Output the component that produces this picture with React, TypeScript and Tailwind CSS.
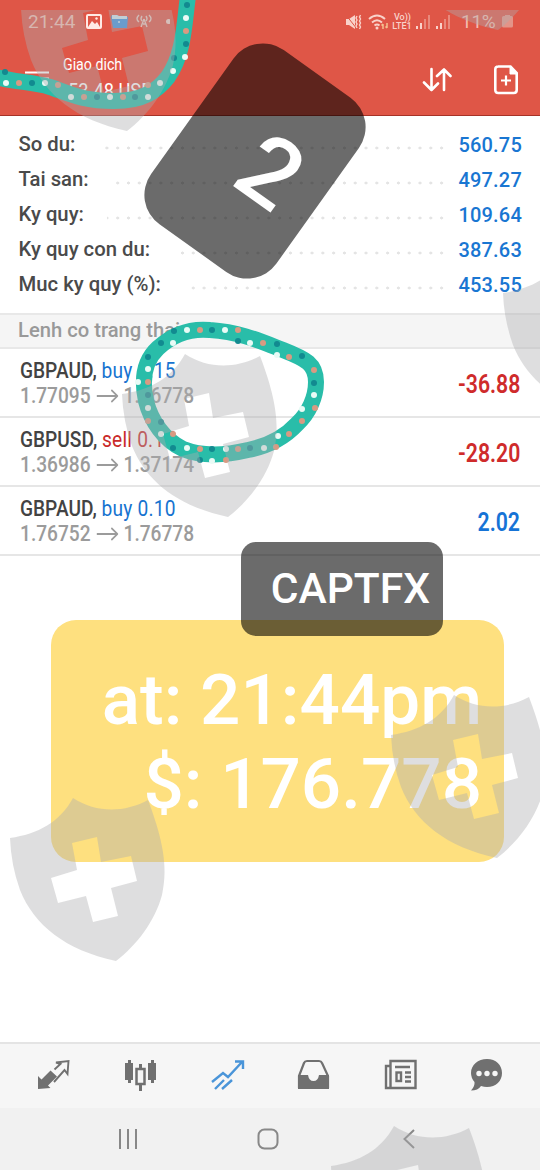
const balances = [
    { label: "So du:", value: "560.75", dots: "w-[346px]" },
    { label: "Tai san:", value: "497.27", dots: "w-[335px]" },
    { label: "Ky quy:", value: "109.64", dots: "w-[340px]" },
    { label: "Ky quy con du:", value: "387.63", dots: "w-[271px]" },
    { label: "Muc ky quy (%):", value: "453.55", dots: "w-[261px]" },
];

const orders = [
    { symbol: "GBPAUD", side: "buy 0.15", from: "1.77095", to: "1.76778", profit: "-36.88" },
    { symbol: "GBPUSD", side: "sell 0.15", from: "1.36986", to: "1.37174", profit: "-28.20" },
    { symbol: "GBPAUD", side: "buy 0.10", from: "1.76752", to: "1.76778", profit: "2.02" },
];

const white = "#e9fbf6";
const teal = "#128a90";
const coral = "#d99a82";

// x, y, colour
const ringDots: [number, number, string][] = [
    [187, 330, white], [200, 330, coral], [212, 330, teal], [225, 330, white], [238, 330, coral],
    [174, 331, teal], [161, 343, teal], [173, 343, white], [238, 341, teal], [250, 343, white],
    [263, 343, coral], [277, 344, teal], [277, 355, white], [289, 357, coral], [302, 356, teal],
    [148, 357, teal], [148, 369, white], [138, 382, white], [148, 382, coral], [148, 395, teal],
    [148, 408, white], [148, 421, coral], [161, 422, teal], [161, 434, white], [173, 434, coral],
    [173, 448, teal], [187, 448, white], [200, 449, coral], [212, 449, teal], [200, 460, teal],
    [212, 461, white], [226, 460, coral], [226, 449, white], [238, 449, coral], [250, 448, teal],
    [264, 448, white], [276, 447, coral], [278, 436, white], [289, 434, coral], [302, 421, coral],
    [302, 409, white], [315, 408, coral], [314, 395, white], [314, 383, teal], [314, 370, coral],
];

const arcDots: [number, number, string][] = [
    [6, 83, white], [5, 72, teal], [19, 83, coral], [32, 83, teal], [45, 83, white],
    [71, 97, white], [58, 85, coral], [84, 97, coral], [97, 97, teal], [110, 97, white],
    [123, 97, coral], [135, 97, teal], [148, 97, white], [148, 85, coral], [160, 83, white],
    [173, 71, white], [174, 58, teal], [185, 57, white], [186, 44, teal], [186, 31, coral],
    [186, 18, white], [187, 5, teal],
];

const shields = [
    "translate(11 -830)",
    "translate(382 -931)",
    "translate(493 -545)",
    "translate(112 -444)",
    "translate(381 -103)",
    "translate(0 0)",
    "translate(321 328)",
];

const StatusBar = () => (
    <div className="flex h-[43px] items-center pt-[1px] pl-[28px] text-[#f3bcb0]">
        <span className="w-[58px] text-[19px]">21:44</span>
        <svg width="84" height="18" viewBox="0 0 84 18" fill="none">
            <rect x="1" y="2" width="14" height="13" rx="1" stroke="#ffe9e4" strokeWidth="2" />
            <path d="M2 14l4-6 3 3 2-2 3 5z" fill="#ffe9e4" />
            <circle cx="10.500" cy="5.500" r="1.200" fill="#ffe9e4" />
            <path d="M25 4l1-2h5l2 2h9l-1 11H27z" fill="#3f91e0" />
            <path d="M26 2h5l2 1h8v3H26z" fill="#cfe5ef" />
            <circle cx="33" cy="9" r="1" fill="#cfe5ef" />
            <path d="M53 2q-4 4 0 7M56 3q-2 3 0 5M63 2q4 4 0 7M60 3q2 3 0 5M58 6l-3 8M58 6l3 8M57 11h3" stroke="#e9c5bc" strokeWidth="1.400" />
            <circle cx="82.500" cy="8.500" r="2.500" fill="#f0cbc2" />
        </svg>
        <svg width="17" height="16" viewBox="0 0 17 16" className="ml-[175px]" fill="none">
            <path d="M1 5h3l6-4v14l-6-4H1z" fill="#f9d2ca" />
            <path d="M1 1l11 14" stroke="#df5647" strokeWidth="1" />
            <path d="M12 2l-1 2 1 2-1 2 1 2-1 2 1 2M15.500 1l-1 2 1 2-1 2 1 2-1 2 1 2-1 2" stroke="#f9d2ca" strokeWidth="1.400" />
        </svg>
        <svg width="21" height="17" viewBox="0 0 21 17" className="ml-[6px]" fill="none">
            <path d="M1 5q8-7 16 0M4 8.500q5-4.500 10 0M6.500 11.500q2.500-2 5 0" stroke="#f9d2ca" strokeWidth="1.900" />
            <circle cx="9" cy="14" r="1.500" fill="#f9d2ca" />
            <path d="M15 10v5m-1.500-3.500L15 10M19 9v5m-1.500-1.500L19 14" stroke="#f5c08f" strokeWidth="1.500" />
        </svg>
        <div className="ml-[3px] w-[21px] text-center text-[9px] leading-[9px] font-medium text-[#f9d2ca]">
            <div>Vo))</div>
            <div className="-ml-[1px]">LTE1</div>
        </div>
        <svg width="34" height="16" viewBox="0 0 34 16" className="ml-[3px]">
            <path d="M0 12h2v3H0zM4 9h2v6H4zM20 12h2v3h-2zM24 9h2v6h-2z" fill="#f9d2ca" />
            <path d="M8 5h2v10H8zM12 1h2v14h-2zM28 5h2v10h-2zM32 1h2v14h-2z" fill="#e98a7d" />
        </svg>
        <span className="ml-[11px] w-[36px] text-[19px] tracking-[-0.3px]">11%</span>
        <svg width="11" height="16" viewBox="0 0 11 16" className="ml-[5px]">
            <path d="M3 1h5v1h1.500q1.500 0 1.500 1.500V12q0 1.500-1.500 1.500h-8Q0 13.500 0 12V3.500Q0 2 1.500 2H3z" fill="#e39488" />
        </svg>
    </div>
);

const Header = () => (
    <header className="h-[116px] border-b border-[#a63328] bg-[#df5647] text-white">
        <StatusBar />
        <div className="flex pl-[25px]">
            <svg width="24" height="24" viewBox="0 0 24 24" className="mt-[27px]" stroke="#fff" strokeWidth="2.200">
                <path d="M0 2.500h24M0 8.500h24M0 14.500h24" />
            </svg>
            <div className="ml-[14px] w-[359px] pt-[12px]">
                <div className="origin-left scale-x-[0.86] text-[16.5px] leading-[20px]">Giao dich</div>
                <div className="mt-[4px] origin-left scale-x-[0.87] text-[21px] leading-[25px]">-53.48 USD</div>
            </div>
            <svg width="30" height="28" viewBox="0 0 30 28" className="mt-[23px]" fill="none" stroke="#fff" strokeWidth="2.600" strokeLinecap="round" strokeLinejoin="round">
                <path d="M9.500 3v21M2 16.500L9.500 24l6.500-6.500M22 24V3.500M15 10l7-6.500 6.500 6.500" />
            </svg>
            <svg width="24" height="30" viewBox="0 0 24 30" className="mt-[22px] ml-[42px]" fill="none" stroke="#fff" strokeWidth="2.600">
                <path d="M4 1.500h12.500l6.200 6.500v17q0 3-3 3H4.300q-3 0-3-3V4.500q0-3 3-3z" />
                <path d="M16 2v7h6.500z" fill="#fff" strokeWidth="1" />
                <path d="M12 10.500v10M7 15.500h10" strokeWidth="2.200" />
            </svg>
        </div>
    </header>
);

const Balances = () => (
    <section className="h-[197px] pt-[11px] pr-[18px] pl-[18.5px]">
        {balances.map((b) => (
            <div key={b.label} className="flex h-[35px] items-center justify-between text-[20.3px] font-medium">
                <span className="whitespace-nowrap text-[#4a4a4a]">{b.label}</span>
                <div className="flex items-center">
                    <div className={`${b.dots} mt-[7px] mr-[11px] h-[4px] bg-[radial-gradient(circle,#e4e4e4_1.2px,transparent_1.8px)] bg-[length:10.8px_4px] bg-right bg-repeat-x`} />
                    <span className="w-[64px] text-right text-[20px] tracking-[0.2px] text-[#1976d2]">{b.value}</span>
                </div>
            </div>
        ))}
    </section>
);

const Orders = () => (
    <section>
        {orders.map((o, i) => (
            <div key={i} className="flex h-[69px] justify-between border-b-2 border-[#e6e6e6] pt-[9px] pr-[20px] pl-[20px]">
                <div className="origin-left scale-x-[0.87] whitespace-nowrap">
                    <div className="text-[22px] leading-[26px] font-medium text-[#434343]">
                        {o.symbol}, <span className={`font-normal tracking-[0.25px] ${o.side.startsWith("buy") ? "text-[#1673d0]" : "text-[#c92a2a]"}`}>{o.side}</span>
                    </div>
                    <div className="flex items-center text-[22px] leading-[24px] font-medium text-[#9b9b9b]">
                        <span className="w-[82px]">{o.from}</span>
                        <svg width="25" height="14" viewBox="0 0 25 14" className="mr-[6px] ml-[6px]" fill="none" stroke="#9b9b9b" strokeWidth="1.800">
                            <path d="M0 7h24M17 1l7 6-7 6" />
                        </svg>
                        <span>{o.to}</span>
                    </div>
                </div>
                <div className={`mt-[11.5px] origin-right scale-x-[0.85] text-[25px] leading-[30px] font-semibold ${o.profit.startsWith("-") ? "text-[#cf2b2b]" : "text-[#1673d6]"}`}>
                    {o.profit}
                </div>
            </div>
        ))}
    </section>
);

const TabBar = () => (
    <nav className="flex h-[66px] items-center justify-between border-t-2 border-[#e4e4e4] bg-[#f6f6f6] px-[37px] pb-[2px] text-[#707070]">
        <svg width="34" height="32" viewBox="0 0 34 32" fill="none">
            <path d="M1 30V17l3.500 3.500 9-9 6.500 6-9 9 2.500 2.500z" fill="#707070" />
            <path d="M17.500 10.500l6-5.500-4.500-1.500L31.500 2l-1 13-3-4L17 23" stroke="#707070" strokeWidth="1.900" />
        </svg>
        <svg width="33" height="33" viewBox="0 0 33 33" fill="none">
            <path d="M4 1h3v3h2v17H7v3H4v-3H1V4h3zM27 1h3v3h2v17h-2v3h-3v-3h-3V4h3z" fill="#707070" />
            <rect x="12.500" y="10" width="8" height="15" stroke="#707070" strokeWidth="2.500" />
            <path d="M16.500 5v5M16.500 25v7" stroke="#707070" strokeWidth="3" />
        </svg>
        <svg width="34" height="32" viewBox="0 0 34 32" fill="none" stroke="#4a95d9" strokeWidth="2.400">
            <path d="M1 23l11-9 5 4L31 3M24 2.500h8V10M4 30l9-9M11 30l10-9" />
        </svg>
        <svg width="33" height="32" viewBox="0 0 33 32" fill="none" className="-ml-[1px]">
            <path d="M2 17L7 4q.8-2 3-2h12q2.200 0 3 2l6 13v12H2z" stroke="#707070" strokeWidth="2.200" strokeLinejoin="round" />
            <path d="M1 16h10q1 6 5.500 6t5.500-6h10v14H1z" fill="#707070" />
        </svg>
        <svg width="33" height="32" viewBox="0 0 33 32" fill="none" stroke="#707070" strokeWidth="2.400">
            <path d="M6.500 2h25v27h-25zM6 7H2v22h5" />
            <path d="M11 8h15M21 13.500h6M21 18h6M21 22.500h6" />
            <rect x="12.500" y="13.500" width="4.500" height="8.500" />
        </svg>
        <svg width="33" height="34" viewBox="0 0 33 34">
            <path d="M17 1c9 0 15 6 15 14s-6 14-15 14q-3 0-6-1-3 4.500-10 4.500 4-4 3.500-8.500Q1 20 1 15C1 7 8 1 17 1z" fill="#707070" />
            <circle cx="9" cy="15.500" r="2.700" fill="#f6f6f6" />
            <circle cx="17" cy="15.500" r="2.700" fill="#f6f6f6" />
            <circle cx="25" cy="15.500" r="2.700" fill="#f6f6f6" />
        </svg>
    </nav>
);

const SystemNav = () => (
    <div className="flex h-[62px] items-center bg-[#f1f1f1] pl-[118px]">
        <svg width="20" height="20" viewBox="0 0 20 20" stroke="#888" strokeWidth="2">
            <path d="M2 0v20M10 0v20M18 0v20" />
        </svg>
        <svg width="22" height="22" viewBox="0 0 22 22" className="ml-[119px]" fill="none" stroke="#888" strokeWidth="2">
            <rect x="1.500" y="1.500" width="19" height="19" rx="6" />
        </svg>
        <svg width="12" height="20" viewBox="0 0 12 20" className="ml-[124px]" fill="none" stroke="#888" strokeWidth="2">
            <path d="M11 1L1.500 10 11 19" />
        </svg>
    </div>
);

// hand drawn marks and watermark shields that lie over the whole screen
const Overlay = () => (
    <svg width="540" height="1170" viewBox="0 0 540 1170" className="absolute top-0 left-0" fill="none">
        <defs>
            <clipPath id="below-top">
                <rect x="0" y="10" width="540" height="1160" />
            </clipPath>
        </defs>
        <g stroke="#29bda9" strokeWidth="16">
            <path d="M-4 77C14 82 34 82 50 87S80 101 114 101C143 101 157 91 168 77C184 54 184 25 188 -4" />
            <path d="M210 330C240 332 260 341 283 350S316 364 316 382C316 397 309 413 297 424C284 438 268 446 248 450C227 455 203 457 183 449C164 440 151 421 146 401C141 378 145 360 158 348C172 335 189 328 210 330Z" />
        </g>
        {[...arcDots, ...ringDots].map(([x, y, color], i) => (
            <circle key={i} cx={x} cy={y} r="3" fill={color} />
        ))}
        <g fill="#acacae" fillOpacity="0.4" fillRule="evenodd" clipPath="url(#below-top)">
            {shields.map((t) => (
                <path
                    key={t}
                    transform={t}
                    d="M10 838C38 834 60 822 73 798C96 813 124 813 148 800C166 847 167 872 162 895C155 921 137 945 116 961C65 950 34 925 20 890Q11 865 10 838ZM72 843L97 837L101 862L131 856L137 881L111 888L118 916L93 922L86 896L58 903L51 878L77 870Z"
                />
            ))}
        </g>
    </svg>
);

const App = () => {
    return (
        <main className="relative flex h-[1170px] w-[540px] flex-col overflow-hidden bg-white font-[Roboto,sans-serif]">
            <Header />
            <Balances />
            <div className="flex h-[36px] items-center border-y-2 border-[#e8e8e8] bg-[#f5f5f5] pb-[2px] pl-[18px] text-[20.2px] font-medium text-[#999]">
                Lenh co trang thai
            </div>
            <Orders />
            <div className="flex-1" />
            <TabBar />
            <SystemNav />

            <div className="absolute top-[53.5px] left-[177.5px] flex h-[214px] w-[154px] rotate-[35.5deg] items-center justify-center rounded-[36px] bg-black/58 pl-[38px] text-[96px] leading-none font-medium text-white">
                2
            </div>
            <div className="absolute top-[620px] left-[51px] h-[242px] w-[453px] rounded-[25px] bg-[#fee07f] pt-[38px] pr-[22px] text-right text-[71px] leading-[83.5px] font-medium whitespace-nowrap text-white">
                <div>at: 21:44pm</div>
                <div>$: 176.778</div>
            </div>
            <div className="absolute top-[542px] left-[241px] h-[94px] w-[202px] rounded-[15px] bg-black/58 pt-[22px] pr-[13px] text-right text-[42.5px] leading-[49px] font-medium text-white">
                CAPTFX
            </div>
            <Overlay />
        </main>
    );
};

export default App;
